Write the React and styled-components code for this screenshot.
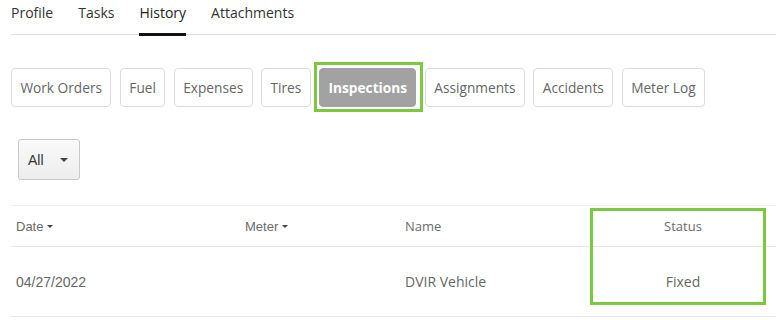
import React, { useState } from "react";
import styled, { createGlobalStyle, css } from "styled-components";

const Global = createGlobalStyle`
  body {
    margin: 0;
    background: #fff;
    font-family: "Open Sans", "Liberation Sans", sans-serif;
  }
`

const Page = styled.div`
  width: 776px;
  height: 320px;
  overflow: hidden;
  padding-left: 11px;
  box-sizing: border-box;
`

const TabBar = styled.div`
  display: flex;
  gap: 25px;
  height: 34px;
  border-bottom: 1px solid #dcdcdc;
`

const Tab = styled.div`
  font-size: 14px;
  line-height: 20px;
  color: #333;
  padding-top: 3px;
  height: 31px;
  box-sizing: border-box;
  border-bottom: 3px solid transparent;
  cursor: pointer;
  ${({ active }) => active && css`
    color: #222;
    border-bottom-color: #111;
    height: 36px;
    padding-bottom: 10px;
    margin-bottom: -1px;
  `}
`

const ButtonRow = styled.div`
  display: flex;
  gap: 8.5px;
  margin-top: 33px;
`

const FilterButton = styled.button`
  position: relative;
  height: 39px;
  padding: 0 8.4px;
  border: 1px solid #dcdcdc;
  border-radius: 4px;
  background: #fff;
  color: #666;
  font-family: "Open Sans", sans-serif;
  font-size: 13.7px;
  cursor: pointer;
  ${({ active }) => active && css`
    background: #a2a2a2;
    border-color: #a2a2a2;
    color: #fff;
    font-weight: 700;
    &::after {
      content: "";
      position: absolute;
      inset: -7px -8px -6px -6px;
      border: 3px solid #7cc940;
    }
  `}
`

const Select = styled.div`
  display: flex;
  align-items: center;
  margin-top: 32px;
  margin-left: 7px;
  width: 62px;
  height: 41px;
  box-sizing: border-box;
  padding-left: 9px;
  border: 1px solid #c9c9c9;
  border-radius: 3px;
  background: linear-gradient(#fafafa, #ededed);
  font-family: "Liberation Sans", Arial, sans-serif;
  font-size: 14px;
  color: #333;
`

const Caret = styled.span`
  display: inline-block;
  width: 0;
  height: 0;
  border-left: ${({ w }) => w}px solid transparent;
  border-right: ${({ w }) => w}px solid transparent;
  border-top: ${({ h }) => h}px solid #444;
  margin-left: ${({ gap }) => gap}px;
  vertical-align: middle;
`

const TableWrap = styled.div`
  position: relative;
  margin-top: 25px;
`

const Grid = styled.div`
  display: grid;
  grid-template-columns: 229px 160px 190px 186px;
  border-top: 1px solid #eee;
`

const HeadCell = styled.div`
  height: 40px;
  display: flex;
  align-items: center;
  justify-content: ${({ center }) => (center ? "center" : "flex-start")};
  padding-left: ${({ center }) => (center ? "0" : "5px")};
  border-bottom: 1px solid #e8e8e8;
  font-family: ${({ arial }) => (arial ? `"Liberation Sans", Arial, sans-serif` : `"Open Sans", sans-serif`)};
  font-size: 13px;
  color: #6b6b6b;
`

const Cell = styled.div`
  height: 69px;
  display: flex;
  align-items: center;
  justify-content: ${({ center }) => (center ? "center" : "flex-start")};
  padding-left: ${({ center }) => (center ? "0" : "5px")};
  border-bottom: 1px solid #e8e8e8;
  font-family: ${({ arial }) => (arial ? `"Liberation Sans", Arial, sans-serif` : `"Open Sans", sans-serif`)};
  font-size: 14px;
  color: #666;
`

const Highlight = styled.div`
  position: absolute;
  left: 579px;
  top: 3px;
  width: 176px;
  height: 97px;
  box-sizing: border-box;
  border: 3px solid #7cc940;
  pointer-events: none;
`

const tabs = ["Profile", "Tasks", "History", "Attachments"];
const filters = ["Work Orders", "Fuel", "Expenses", "Tires", "Inspections", "Assignments", "Accidents", "Meter Log"];

export default function App() {
  const [activeTab, setActiveTab] = useState("History");
  const [activeFilter, setActiveFilter] = useState("Inspections");

  return (
    <Page>
      <Global />
      <TabBar>
        {tabs.map(t => (
          <Tab key={t} active={activeTab == t} onClick={() => setActiveTab(t)}>{t}</Tab>
        ))}
      </TabBar>

      <ButtonRow>
        {filters.map(f => (
          <FilterButton key={f} active={activeFilter == f} onClick={() => setActiveFilter(f)}>{f}</FilterButton>
        ))}
      </ButtonRow>

      <Select>
        All
        <Caret w={4} h={4} gap={16} />
      </Select>

      <TableWrap>
        <Grid>
          <HeadCell arial>Date<Caret w={3} h={3} gap={4} /></HeadCell>
          <HeadCell arial>Meter<Caret w={3} h={3} gap={4} /></HeadCell>
          <HeadCell>Name</HeadCell>
          <HeadCell center>Status</HeadCell>

          <Cell arial>04/27/2022</Cell>
          <Cell></Cell>
          <Cell>DVIR Vehicle</Cell>
          <Cell center>Fixed</Cell>
        </Grid>
        <Highlight />
      </TableWrap>
    </Page>
  );
}
